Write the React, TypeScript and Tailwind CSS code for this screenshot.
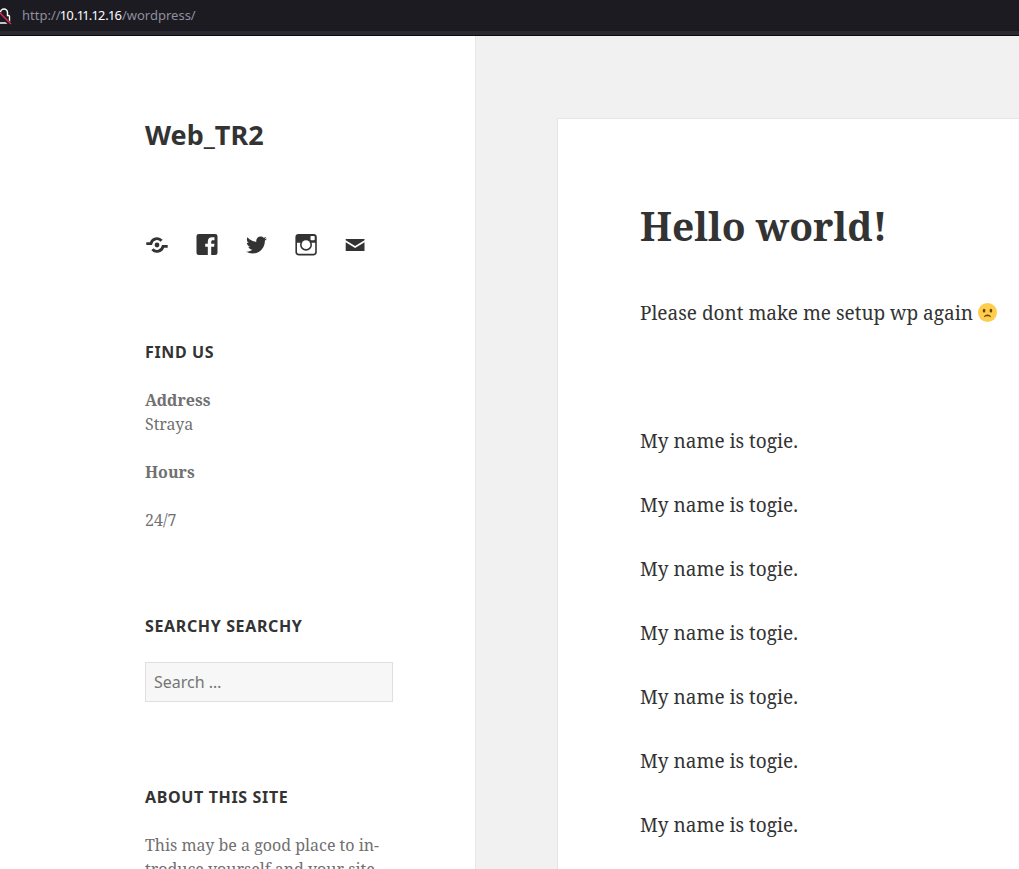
import { FaTwitter } from "react-icons/fa";

const serif = "font-['Noto_Serif','Liberation_Serif',serif]";
const sans = "font-['Noto_Sans',sans-serif]";

function InsecureLock() {
  return (
    <svg className="-ml-2 h-5 w-5 shrink-0" viewBox="0 0 20 20" fill="none" aria-hidden="true">
      <path d="M8.5 9.5V6.5a3.5 3.500 0 0 1 7 0v3h1a1 1 0 0 1 1 1V15a2 2 0 0 1-2 2H6" stroke="#fbfbfe" strokeWidth="1.400" />
      <path d="M4.500 4.500l14 14" stroke="#1c1b22" strokeWidth="3.500" />
      <path d="M4.500 3.500l14.500 14.500" stroke="#e22850" strokeWidth="1.500" />
    </svg>
  );
}

function ShareIcon() {
  return (
    <svg className="h-6 w-6" viewBox="0 0 24 24" fill="none" aria-hidden="true">
      <circle cx="12" cy="12" r="2.400" fill="currentColor" />
      <path d="M1.300 10.600h4.650A6.200 6.200 0 0 1 16.600 7.800" stroke="currentColor" strokeWidth="2.800" />
      <path d="M22.700 13.400h-4.650A6.200 6.200 0 0 1 7.400 16.200" stroke="currentColor" strokeWidth="2.800" />
    </svg>
  );
}

function FacebookIcon() {
  return (
    <svg className="h-6 w-6" viewBox="0 0 24 24" fill="currentColor" aria-hidden="true">
      <path d="M20 1H4C2.3 1 1.5 1.8 1.5 3.500v16c0 1.700.8 2.500 2.500 2.500h8.800v-8.200h-2.600v-3h2.600V8.600c0-2.900 1.600-4.400 4.200-4.400h2.500v3h-1.600c-1.300 0-1.700.6-1.700 1.600v2h3.300l-.4 3h-2.900V22H20c1.700 0 2.500-.8 2.500-2.500v-16C22.500 1.800 21.700 1 20 1z" />
    </svg>
  );
}

function InstagramIcon() {
  return (
    <svg className="h-6 w-6" viewBox="0 0 24 24" fill="none" aria-hidden="true">
      <rect x="2.200" y="1.800" width="19.800" height="19.800" rx="2.500" stroke="currentColor" strokeWidth="1.600" />
      <path d="M2 9.800V4a2.500 2.500 0 0 1 2.500-2.500h15A2.500 2.500 0 0 1 22 4v5.800z" fill="currentColor" />
      <circle cx="12" cy="11.700" r="6" fill="currentColor" />
      <circle cx="12" cy="11.700" r="4.400" fill="#fff" />
      <rect x="16.500" y="3" width="4.200" height="4.200" rx=".8" fill="#fff" />
    </svg>
  );
}

function MailIcon() {
  return (
    <svg className="h-6 w-6" viewBox="0 0 24 24" fill="currentColor" aria-hidden="true">
      <path d="M2.700 6h18.800v1.200L12.100 13 2.700 7.200z" />
      <path d="M2.700 9.200l9.400 5.800 9.400-5.800V18H2.700z" />
    </svg>
  );
}

function FrownEmoji() {
  return (
    <svg className="inline-block h-[19px] w-[19px] align-[-2px]" viewBox="0 0 36 36" role="img" aria-label="Frowning face">
      <circle cx="18" cy="18" r="18" fill="#ffcc4d" />
      <ellipse cx="11.500" cy="14.500" rx="2.500" ry="3.500" fill="#664500" />
      <ellipse cx="24.500" cy="14.500" rx="2.500" ry="3.500" fill="#664500" />
      <path d="M11 27.500c.5-3.500 3.500-5.500 7-5.500s6.500 2 7 5.500c-2-1.500-4-2.500-7-2.500s-5 1-7 2.500z" fill="#664500" />
    </svg>
  );
}

const socials = [
  { label: "Website", icon: <ShareIcon /> },
  { label: "Facebook", icon: <FacebookIcon /> },
  { label: "Twitter", icon: <FaTwitter className="mx-auto h-6 w-[21px]" aria-hidden="true" /> },
  { label: "Instagram", icon: <InstagramIcon /> },
  { label: "Email", icon: <MailIcon /> },
];

const lines = Array.from({ length: 7 }, () => "My name is togie.");

function WidgetTitle({ children }: { children: string }) {
  return <h2 className={`mb-6 text-base leading-6 font-bold tracking-[0.04em] text-[#333] uppercase ${sans}`}>{children}</h2>;
}

export default function App() {
  return (
    <div className={`flex h-screen flex-col overflow-hidden bg-[#f1f1f1] ${serif}`}>
      <header className={`flex h-9 shrink-0 items-start border-b border-[#0c0c0d] bg-[#2b2a33] text-[13px] text-[#8f8f9d] ${sans}`}>
        <div className="flex h-[31px] w-full items-center gap-2.5 bg-[#1c1b22]">
          <InsecureLock />
          <span className="proportional-nums">
            http://<span className="text-[#fbfbfe]">10.11.12.16</span>/wordpress/
          </span>
        </div>
      </header>

      <div className="flex min-h-0 flex-1">
        <aside className="w-[476px] shrink-0 border-r border-[#e7e7e7] bg-white pt-[81px] pr-[82px] pl-[145px] text-base leading-6 text-[#707070]">
          <h1 className={`text-[27px] leading-9 font-bold text-[#333] ${sans}`}>
            <a href="#home">Web_TR2</a>
          </h1>

          <nav aria-label="Social links" className="mt-20">
            <ul className="grid grid-cols-5 text-[#333]">
              {socials.map((s) => (
                <li key={s.label}>
                  <a href={`#${s.label.toLowerCase()}`} aria-label={s.label} className="block w-6">
                    {s.icon}
                  </a>
                </li>
              ))}
            </ul>
          </nav>

          <section className="mt-[83px]">
            <WidgetTitle>Find us</WidgetTitle>
            <p>
              <strong>Address</strong>
              <br />
              Straya
            </p>
            <p className="mt-6">
              <strong>Hours</strong>
            </p>
            <p className="mt-6">24/7</p>
          </section>

          <section className="mt-[82px]">
            <WidgetTitle>Searchy Searchy</WidgetTitle>
            <form role="search">
              <input
                type="search"
                aria-label="Search"
                placeholder="Search …"
                className={`block h-10 w-full border border-[#dfdfdf] bg-[#f7f7f7] px-2 text-base text-[#707070] placeholder:text-[#757575] ${sans}`}
              />
            </form>
          </section>

          <section className="mt-[83px]">
            <WidgetTitle>About this site</WidgetTitle>
            <p>This may be a good place to in&shy;troduce yourself and your site</p>
          </section>
        </aside>

        <main className="flex min-w-0 flex-1 flex-col pt-[82px] pl-[81px]">
          <article className="flex-1 border-t border-l border-[#e5e5e5] bg-white pt-[81px] pl-[82px] text-[19px] leading-8 text-[#333]">
            <h2 className="text-[39px] leading-[52px] font-bold">Hello world!</h2>
            <p className="mt-[45px]">
              Please dont make me setup wp again <FrownEmoji />
            </p>
            <div className="mt-24 space-y-8">
              {lines.map((line, i) => (
                <p key={i}>{line}</p>
              ))}
            </div>
          </article>
        </main>
      </div>
    </div>
  );
}
